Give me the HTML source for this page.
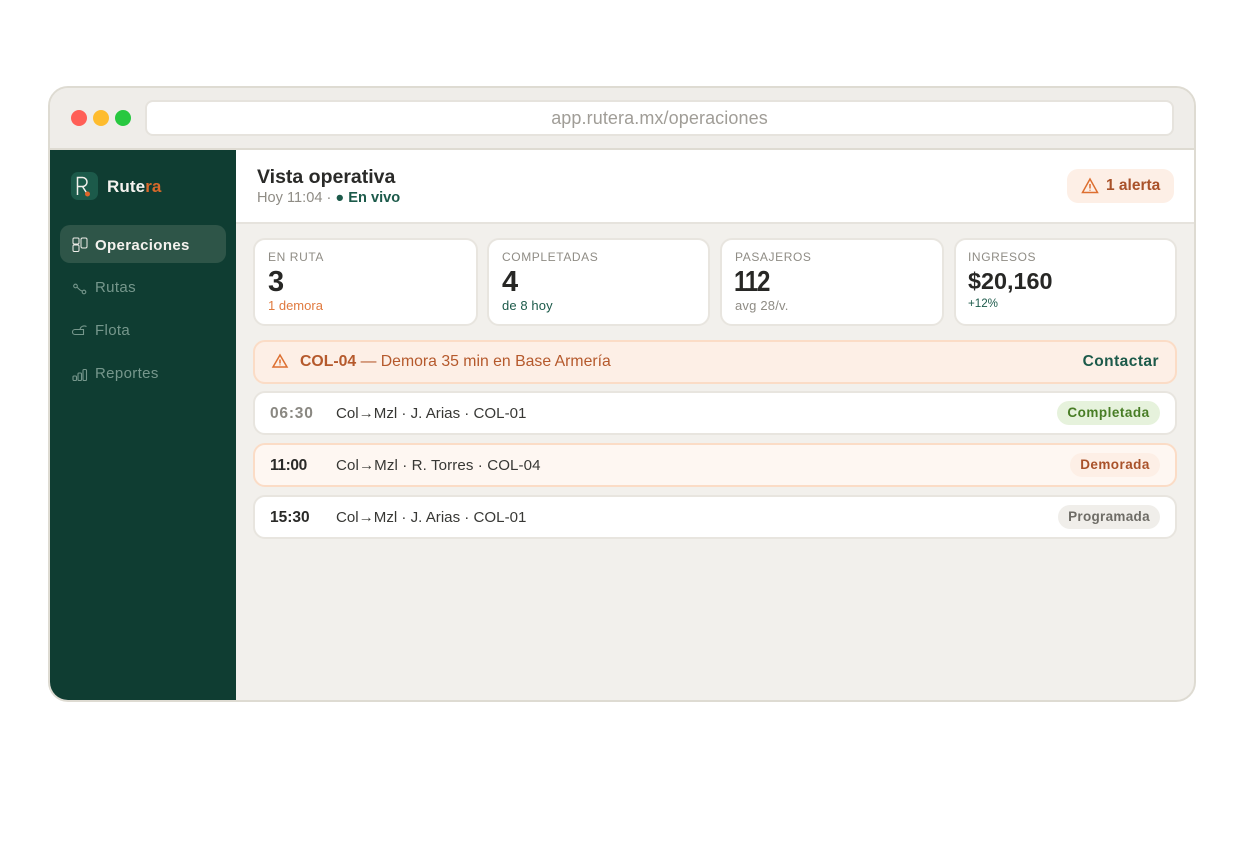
<!DOCTYPE html>
<html lang="es"><head><meta charset="utf-8"><title>Rutera</title>
<style>
*{box-sizing:border-box;margin:0;padding:0}
html,body{width:1248px;height:860px;background:#fff;overflow:hidden;font-family:"Liberation Sans",sans-serif}
.a{position:absolute;white-space:nowrap}
.win{position:absolute;left:48px;top:86px;width:1148px;height:616px;border:2px solid #dedbd2;border-radius:20px;background:#f2f0ec;overflow:hidden}
.bar{position:absolute;left:0;top:0;width:1144px;height:62px;background:#efede9;border-bottom:2px solid #dedbd2}
.dot{position:absolute;top:22px;width:16px;height:16px;border-radius:50%}
.url{position:absolute;left:95px;top:12px;width:1029px;height:36px;background:#fff;border:2px solid #e6e3dd;border-radius:8px;text-align:center;line-height:32px;font-size:18px;letter-spacing:.1px;color:#a09d97}
.side{position:absolute;left:0;top:62px;width:186px;height:552px;background:#0f3d32}
.main{position:absolute;left:186px;top:62px;width:960px;height:552px}
.head{position:absolute;left:0;top:0;width:960px;height:74px;background:#fff;border-bottom:2px solid #e6e3dd}
.card{position:absolute;background:#fff;border:2px solid #e8e5df;border-radius:12px}
.row{position:absolute;left:17px;width:924px;height:44px;background:#fff;border:2px solid #e8e5df;border-radius:12px}
.lab{left:13px;top:10px;font-size:12px;color:#8f8c85;letter-spacing:.6px}
.num{left:13px;top:25px;font-size:29px;font-weight:700;color:#272725;line-height:34px}
.sub{left:13px;top:58px;font-size:13px;line-height:15px}
.t{left:15px;top:11px;font-size:15.5px;font-weight:700;color:#2a2a28;line-height:19px}
.d{left:81px;top:11px;font-size:15.1px;color:#383835;line-height:19px}
.b{position:absolute;right:15px;top:8px;height:24px;border-radius:12px;font-size:13.5px;font-weight:700;line-height:24px;text-align:center}
.nav{font-size:15px;color:#76978c;line-height:18px;letter-spacing:.35px}
svg{position:absolute;fill:none}
</style></head><body>
<div class="win">
 <div class="bar">
  <div class="dot" style="left:21px;background:#ff5f57"></div>
  <div class="dot" style="left:43px;background:#febc2e"></div>
  <div class="dot" style="left:65px;background:#28c840"></div>
  <div class="url">app.rutera.mx/operaciones</div>
 </div>
 <div class="side">
  <div class="a" style="left:21px;top:22px;width:27px;height:28px;border-radius:7px;background:#1c5a4a"></div>
  <svg style="left:21px;top:22px" width="27" height="28" viewBox="0 0 27 28"><path d="M6.500 23V5.500h5a4.500 4.500 0 0 1 0 9h-5M11.500 14.500l4.500 7" stroke="#f2f0ec" stroke-width="1.500"/><circle cx="16.500" cy="22" r="2.500" fill="#e0662a"/></svg>
  <div class="a" style="left:57px;top:27px;font-size:17px;font-weight:700;color:#f4f2ee;line-height:20px;letter-spacing:.1px">Rute<span style="color:#d9692b">ra</span></div>

  <div class="a" style="left:10px;top:75px;width:166px;height:38px;border-radius:10px;background:#2e5548"></div>
  <svg style="left:22px;top:87px" width="16" height="16" viewBox="0 0 16 16" stroke="#f0eeea" stroke-width="1"><rect x="1" y="1" width="6" height="6" rx="1.200"/><rect x="1" y="8" width="6" height="6.500" rx="1.200"/><rect x="9" y="1" width="6" height="10" rx="1.500"/></svg>
  <div class="a" style="left:45px;top:87px;font-size:15px;font-weight:700;color:#f4f2ee;line-height:18px;letter-spacing:.35px">Operaciones</div>

  <svg style="left:22px;top:131px" width="16" height="16" viewBox="0 0 16 16" stroke="#76978c" stroke-width="1.100"><circle cx="3.500" cy="5" r="1.800"/><circle cx="12" cy="11" r="1.800"/><path d="M5.200 6.300C7 8 8 9.500 10.300 10"/></svg>
  <div class="a nav" style="left:45px;top:129px">Rutas</div>

  <svg style="left:22px;top:173px" width="16" height="16" viewBox="0 0 16 16" stroke="#76978c" stroke-width="1.100"><path d="M3 6.500h8.500v5H3a2.500 2.500 0 0 1 0-5ZM8 6.500C8.500 3.500 11.500 2 14.500 3.500"/></svg>
  <div class="a nav" style="left:45px;top:172px">Flota</div>

  <svg style="left:22px;top:216px" width="16" height="16" viewBox="0 0 16 16" stroke="#76978c" stroke-width="1.100"><rect x="1" y="10" width="3.500" height="4.500" rx="1"/><rect x="6" y="7" width="3.500" height="7.500" rx="1"/><rect x="11" y="3.500" width="3.500" height="11" rx="1"/></svg>
  <div class="a nav" style="left:45px;top:215px">Reportes</div>
 </div>
 <div class="main">
  <div class="head">
   <div class="a" style="left:21px;top:15px;font-size:19.500px;font-weight:700;color:#2a2a28;line-height:24px">Vista operativa</div>
   <div class="a" style="left:21px;top:39px;font-size:14.600px;color:#8f8c85;line-height:19px">Hoy 11:04 · <span style="color:#1c5a4a;font-weight:700">● En vivo</span></div>
   <div class="a" style="left:831px;top:19px;width:107px;height:34px;border-radius:11px;background:#fdefe6"></div>
   <svg style="left:844px;top:26px" width="20" height="20" viewBox="0 0 20 20" stroke="#dd6f30" stroke-width="1.500"><path d="M10 3 2.500 16.500h15ZM10 8v4.500M10 13.800v.8"/></svg>
   <div class="a" style="left:870px;top:27px;font-size:15.500px;font-weight:700;color:#a9522a;line-height:18px">1 alerta</div>
  </div>

  <div class="card" style="left:17px;top:88px;width:225px;height:88px"><div class="a lab">EN RUTA</div><div class="a num">3</div><div class="a sub" style="color:#e07a3f">1 demora</div></div>
  <div class="card" style="left:251px;top:88px;width:223px;height:88px"><div class="a lab">COMPLETADAS</div><div class="a num">4</div><div class="a sub" style="color:#1c5a4a;letter-spacing:.1px">de 8 hoy</div></div>
  <div class="card" style="left:484px;top:88px;width:224px;height:88px"><div class="a lab">PASAJEROS</div><div class="a num" style="letter-spacing:-1.500px;left:12px;transform:scaleX(.83);transform-origin:left center">112</div><div class="a sub" style="color:#8f8c85;letter-spacing:.2px">avg 28/v.</div></div>
  <div class="card" style="left:718px;top:88px;width:223px;height:88px"><div class="a lab" style="left:12px">INGRESOS</div><div class="a num" style="font-size:23.400px;left:12px;top:24px">$20,160</div><div class="a sub" style="color:#1c5a4a;font-size:11.600px;left:12px;top:56px">+12%</div></div>

  <div class="row" style="top:190px;background:#fdefe6;border-color:#fbdcc6">
   <svg style="left:15px;top:9px" width="20" height="20" viewBox="0 0 20 20" stroke="#dd6f30" stroke-width="1.500"><path d="M10 4 3 16h14ZM10 8.500v4M10 13.500v.8"/></svg>
   <div class="a" style="left:45px;top:10px;font-size:15.800px;color:#b5592c;line-height:19px"><b>COL-04</b> — Demora 35 min en Base Armería</div>
   <div class="a" style="right:16px;top:10px;font-size:15.500px;font-weight:700;color:#1c5a4a;line-height:19px;letter-spacing:.45px">Contactar</div>
  </div>
  <div class="row" style="top:241px">
   <div class="a t" style="color:#8a8882;letter-spacing:.8px">06:30</div><div class="a d">Col→Mzl · J. Arias · COL-01</div>
   <div class="b" style="width:103px;background:#e6f2dc;color:#487d25;letter-spacing:.5px">Completada</div>
  </div>
  <div class="row" style="top:293px;background:#fef7f2;border-color:#fbdcc6">
   <div class="a t" style="letter-spacing:-.4px">11:00</div><div class="a d" style="letter-spacing:.1px">Col→Mzl · R. Torres · COL-04</div>
   <div class="b" style="width:90px;background:#fdefe6;color:#a9522a;letter-spacing:.45px">Demorada</div>
  </div>
  <div class="row" style="top:345px">
   <div class="a t">15:30</div><div class="a d">Col→Mzl · J. Arias · COL-01</div>
   <div class="b" style="width:102px;background:#f0eeea;color:#6e6c66;letter-spacing:.3px">Programada</div>
  </div>
 </div>
</div>
</body></html>
